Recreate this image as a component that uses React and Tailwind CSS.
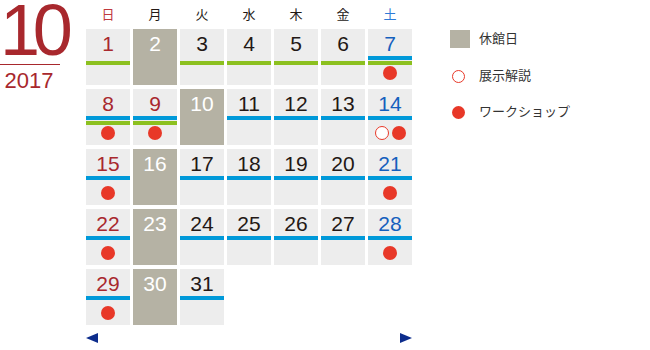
const WEEK = ['日', '月', '火', '水', '木', '金', '土']

// b: blue line, g: green line, o: open circle (展示解説), w: workshop dot, c: closed, h: holiday
const DAYS = {
  1: 'g', 2: 'c', 3: 'g', 4: 'g', 5: 'g', 6: 'g', 7: 'bgw',
  8: 'bgw', 9: 'bgwh', 10: 'c', 11: 'b', 12: 'b', 13: 'b', 14: 'bow',
  15: 'bw', 16: 'c', 17: 'b', 18: 'b', 19: 'b', 20: 'b', 21: 'bw',
  22: 'bw', 23: 'c', 24: 'b', 25: 'b', 26: 'b', 27: 'b', 28: 'bw',
  29: 'bw', 30: 'c', 31: 'b',
}

function dayColor(col, holiday) {
  if (col === 0 || holiday) return 'text-[#a8282d]'
  if (col === 6) return 'text-[#1560bd]'
  return 'text-[#231815]'
}

function Cell({ day, col }) {
  const f = DAYS[day] || ''
  if (f.includes('c')) {
    return (
      <div className="h-[56px] bg-[#b5b2a4]">
        <div className="h-[27px] pt-[4px] text-center text-[21px] leading-[21px] text-white">{day}</div>
      </div>
    )
  }
  return (
    <div className="h-[56px] bg-[#ededed] flex flex-col">
      <div className={`h-[27px] pt-[4px] text-center text-[21px] leading-[21px] ${dayColor(col, f.includes('h'))}`}>{day}</div>
      <div className={`h-[4px] ${f.includes('b') ? 'bg-[#0099d9]' : ''}`} />
      <div className={`h-[4px] mt-[1px] ${f.includes('g') ? 'bg-[#8cc01f]' : ''}`} />
      <div className="flex justify-center gap-[3px] mt-[1px]">
        {f.includes('o') && <span className="w-[14px] h-[14px] rounded-full border-[1.5px] border-[#e83828] bg-white" />}
        {f.includes('w') && <span className="w-[14px] h-[14px] rounded-full bg-[#e83828]" />}
      </div>
    </div>
  )
}

export default function App() {
  const cells = []
  for (let d = 1; d <= 31; d++) cells.push(d)

  return (
    <div className="w-[650px] h-[350px] bg-white flex" style={{ fontFamily: '"Liberation Sans", "Noto Sans CJK JP", sans-serif' }}>
      <div className="w-[86px] shrink-0 text-[#a8282d]">
        <div className="text-[72px] leading-[60px] tracking-[-0.1em] whitespace-nowrap">10</div>
        <div className="w-[60px] h-px bg-[#a8282d] mt-[4px]" />
        <div className="w-[60px] text-[22px] leading-[22px] text-center mt-[5px] pr-[2px]">2017</div>
      </div>

      <div className="w-[326px] shrink-0">
        <div className="grid grid-cols-[repeat(7,44px)] gap-x-[3px] h-[29px] items-center text-[13px]">
          {WEEK.map((w, i) => (
            <div key={w} className={`text-center ${i === 0 ? 'text-[#c0393e]' : i === 6 ? 'text-[#2f7ad6]' : 'text-[#231815]'}`}>{w}</div>
          ))}
        </div>
        <div className="grid grid-cols-[repeat(7,44px)] gap-x-[3px] gap-y-[4px]">
          {cells.map((d, i) => (
            <Cell key={d} day={d} col={i % 7} />
          ))}
        </div>
        <div className="flex justify-between mt-[8px]">
          <span className="w-0 h-0 border-y-[5.5px] border-y-transparent border-r-[12px] border-r-[#0d2d8c]" />
          <span className="w-0 h-0 border-y-[5.5px] border-y-transparent border-l-[12px] border-l-[#0d2d8c]" />
        </div>
      </div>

      <div className="pl-[38px] pt-[30px] text-[13px] text-[#333]">
        <div className="flex items-center h-[18px]">
          <span className="w-[20px] h-[18px] bg-[#b5b2a4]" />
          <span className="ml-[9px]">休館日</span>
        </div>
        <div className="flex items-center h-[18px] mt-[19px]">
          <span className="w-[13px] h-[13px] ml-[2px] rounded-full border-[1.5px] border-[#e83828]" />
          <span className="ml-[14px]">展示解説</span>
        </div>
        <div className="flex items-center h-[18px] mt-[18px]">
          <span className="w-[13px] h-[13px] ml-[2px] rounded-full bg-[#e83828]" />
          <span className="ml-[14px]">ワークショップ</span>
        </div>
      </div>
    </div>
  )
}
